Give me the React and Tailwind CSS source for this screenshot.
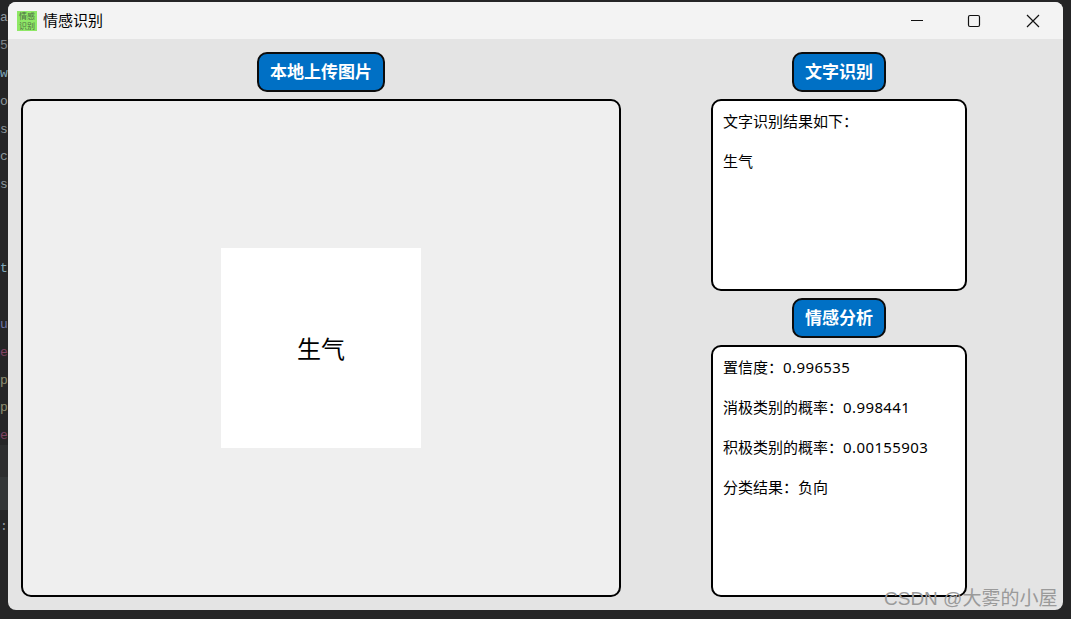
const cjk = "font-['Noto_Sans','Noto_Sans_CJK_SC',sans-serif]";

function Pill({ children, w }) {
  return (
    <div className={`${w} h-10 shrink-0 flex items-center justify-center rounded-[10px] border-2 border-[#0c0c0c] bg-[#0070c5] text-white text-[17px] font-bold`}>
      {children}
    </div>
  );
}

const Num = ({ children }) => <span className="tracking-[0.4px]">{children}</span>;

const fragments = [
  ["a", "#8d979e"], ["5", "#7d8287"], ["w", "#7fa6b8"], ["o", "#8d979e"], ["s", "#8d979e"], ["c", "#8d979e"], ["s", "#8d979e"],
  ["", ""], ["", ""], ["t", "#7fa6b8"], ["", ""], ["u", "#6f73a5"], ["e", "#7f4262"], ["p", "#8d8d70"], ["p", "#8d8d70"], ["e", "#7f4262"],
];

export default function App() {
  return (
    <div className={`${cjk} relative w-[1071px] h-[619px] overflow-hidden bg-[#252526] flex`}>
      <div className="w-2 shrink-0 h-full overflow-hidden flex flex-col pt-1 font-['Liberation_Mono',monospace] text-[13px] leading-[27.9px]">
        {fragments.map(([t, c], i) => (
          <div key={i} className="h-[27.9px] shrink-0 whitespace-nowrap" style={{ color: c }}>{t}</div>
        ))}
        <div className="h-[32px] shrink-0 bg-[#2c2d2e] -mt-[5px]" />
        <div className="h-[33px] shrink-0 bg-[#333637]" />
        <div className="mt-[3px] text-[#8d979e]">:</div>
      </div>

      <div className="mt-[2px] w-[1055px] h-[608px] shrink-0 rounded-[8px] overflow-hidden flex flex-col bg-[#e4e4e4]">
        <div className="h-[37px] shrink-0 bg-[#f3f3f3] flex items-center">
          <div className="ml-[9px] w-5 h-5 mt-[1px] bg-[#8fe866] flex flex-col items-center justify-between overflow-hidden text-[#4d6b45] text-[8px] leading-[10px]">
            <span>情感</span>
            <span>识别</span>
          </div>
          <div className="ml-[6px] text-[15px] text-black">情感识别</div>
          <div className="ml-auto flex items-center">
            <div className="w-[58px] flex justify-center">
              <svg width="14" height="14" viewBox="0 0 14 14"><path d="M1 6.5H13" stroke="#111" strokeWidth="1.2" fill="none" /></svg>
            </div>
            <div className="w-[58px] flex justify-center pr-[2px]">
              <svg width="14" height="14" viewBox="0 0 14 14"><rect x="1.5" y="1.5" width="11" height="11" rx="1.5" stroke="#111" strokeWidth="1.2" fill="none" /></svg>
            </div>
            <div className="w-[58px] flex justify-center mr-[1px]">
              <svg width="14" height="14" viewBox="0 0 14 14"><path d="M1 1L13 13M13 1L1 13" stroke="#111" strokeWidth="1.2" fill="none" /></svg>
            </div>
          </div>
        </div>

        <div className="flex-1 flex pl-[13px] pt-[13px]">
          <div className="w-[600px] flex flex-col items-center gap-[7px]">
            <Pill w="w-[128px]">本地上传图片</Pill>
            <div className="w-[600px] h-[498px] rounded-[10px] border-2 border-black bg-[#efefef] flex items-center justify-center">
              <div className="w-[200px] h-[200px] bg-white flex items-center justify-center pt-[2px] text-[24px] text-black">生气</div>
            </div>
          </div>

          <div className="ml-[90px] w-[256px] flex flex-col items-center">
            <Pill w="w-[94px]">文字识别</Pill>
            <div className="mt-[7px] w-[256px] h-[192px] rounded-[10px] border-2 border-black bg-white px-[10px] pt-[10px] text-[15px] leading-5 text-black">
              <p className="mb-5">文字识别结果如下：</p>
              <p>生气</p>
            </div>
            <div className="mt-[7px]"><Pill w="w-[94px]">情感分析</Pill></div>
            <div className="mt-[7px] w-[256px] h-[252px] rounded-[10px] border-2 border-black bg-white px-[10px] pt-[10px] text-[15px] leading-5 text-black">
              <p className="mb-5">置信度：<Num>0.996535</Num></p>
              <p className="mb-5">消极类别的概率：<Num>0.998441</Num></p>
              <p className="mb-5">积极类别的概率：<Num>0.00155903</Num></p>
              <p>分类结果：负向</p>
            </div>
          </div>
        </div>
      </div>

      <div className="absolute left-[884px] top-[587px] text-[19px] leading-6 text-[#9a9a9a] font-['Liberation_Sans','Noto_Sans_CJK_SC',sans-serif] whitespace-nowrap">CSDN @大雾的小屋</div>
    </div>
  );
}
